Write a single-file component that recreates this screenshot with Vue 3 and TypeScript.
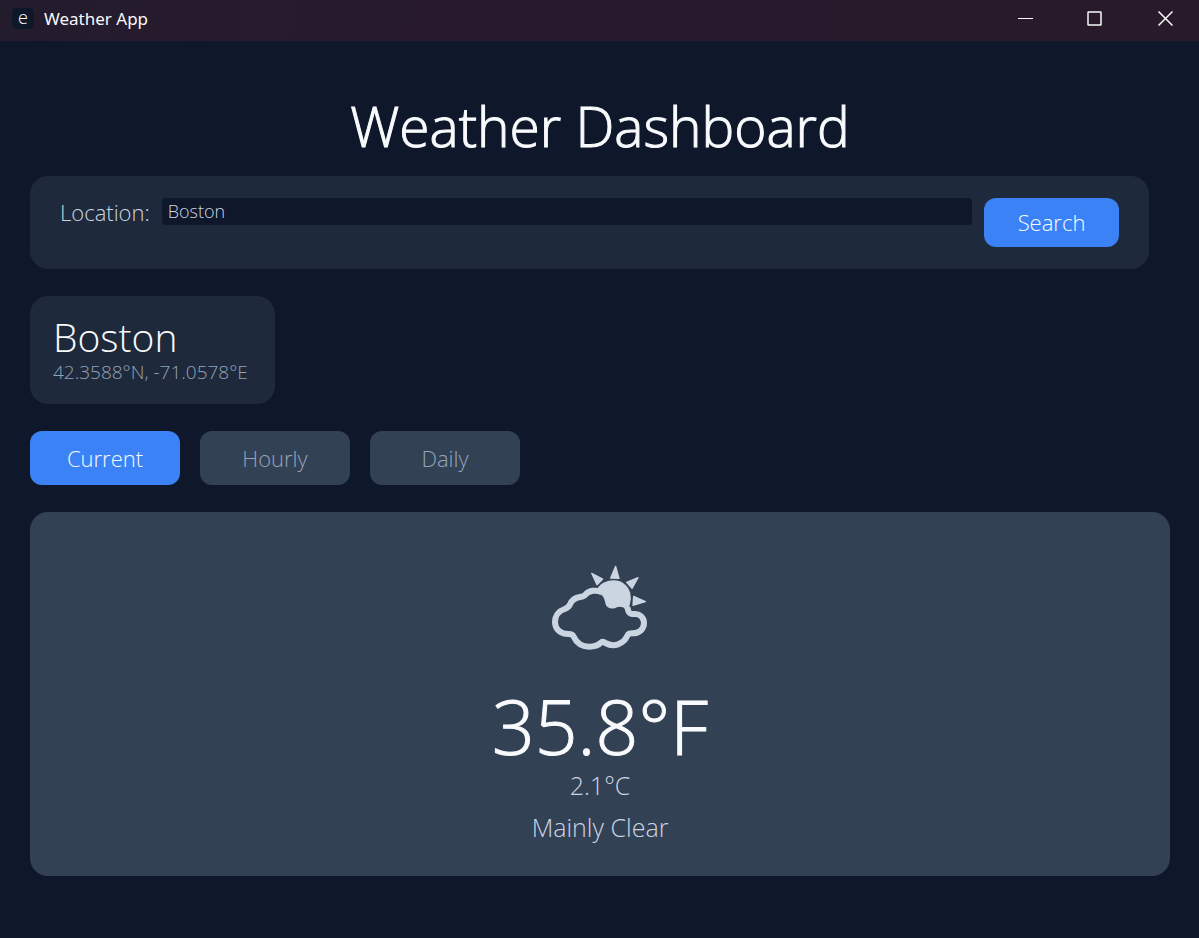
<script setup lang="ts">
import { ref } from 'vue'

type View = 'Current' | 'Hourly' | 'Daily'

const views: View[] = ['Current', 'Hourly', 'Daily']
const active = ref<View>('Current')
const query = ref('Boston')
const place = { name: 'Boston', coordinates: '42.3588°N, -71.0578°E' }
const weather = { fahrenheit: '35.8°F', celsius: '2.1°C', condition: 'Mainly Clear' }
</script>

<template>
  <div class="window">
    <header class="titlebar">
      <span class="app-icon" aria-hidden="true">e</span>
      <span class="app-name">Weather App</span>
      <div class="controls">
        <button type="button" aria-label="Minimize">
          <svg width="16" height="16" viewBox="0 0 16 16"><path d="M1 7.500H16" /></svg>
        </button>
        <button type="button" aria-label="Maximize">
          <svg width="16" height="16" viewBox="0 0 16 16">
            <rect class="frame" x="1" y="1" width="13" height="13" rx="0.500" />
          </svg>
        </button>
        <button type="button" aria-label="Close">
          <svg width="16" height="16" viewBox="0 0 16 16"><path class="cross" d="M1.500 0.500L15.500 14.500M15.500 0.500L1.500 14.500" /></svg>
        </button>
      </div>
    </header>

    <main class="content">
      <h1>Weather Dashboard</h1>

      <form class="search" @submit.prevent>
        <label for="location">Location:</label>
        <input id="location" v-model="query" type="text" autocomplete="off" spellcheck="false" />
        <button type="submit">Search</button>
      </form>

      <section class="place">
        <h2>{{ place.name }}</h2>
        <p>{{ place.coordinates }}</p>
      </section>

      <nav class="tabs">
        <button
          v-for="view in views"
          :key="view"
          type="button"
          :class="{ active: view === active }"
          @click="active = view"
        >
          {{ view }}
        </button>
      </nav>

      <section class="weather">
        <svg class="weather-icon" viewBox="0 0 360 315" aria-hidden="true">
          <g class="solid">
            <path d="M155 55L188 72L171 89Z" />
            <path d="M227 34L237 70L212 69Z" />
            <path d="M294 68L276 100L260 82Z" />
            <path d="M281 124L316 140L279 151Z" />
            <path d="M176 98C192 78 228 70 250 87C270 101 275 128 267 150L262 164C249 151 238 150 224 158C207 161 198 154 197 139C194 123 186 115 172 112Z" />
          </g>
          <path
            class="outline"
            d="M186 112C168 103 147 107 137 118C133 124 127 125 120 126C105 128 94 137 89 150C86 157 81 159 74 162C56 168 45 183 45 201C45 223 62 237 85 237C94 237 98 238 101 245C110 265 127 275 148 275C163 275 176 270 183 263C188 259 191 260 196 264C207 270 222 272 234 268C248 263 256 255 261 244C264 235 268 235 278 235C298 235 312 222 312 204C312 186 297 175 282 177C272 178 268 176 265 168L262 157"
          />
        </svg>
        <p class="fahrenheit">{{ weather.fahrenheit }}</p>
        <p class="celsius">{{ weather.celsius }}</p>
        <p class="condition">{{ weather.condition }}</p>
      </section>
    </main>
  </div>
</template>

<style>
body {
  margin: 0;
  background: #0f172a;
}
</style>

<style scoped>
.window {
  min-height: 100vh;
  background: #0f172a;
  color: #f8fafc;
  font-family: "Open Sans", "Noto Sans", sans-serif;
  font-weight: 300;
}

h1,
h2,
p {
  margin: 0;
  font-weight: 300;
}

button {
  border: 0;
  padding: 0;
  font: inherit;
  cursor: pointer;
}

.titlebar {
  display: flex;
  align-items: center;
  height: 41px;
  box-sizing: border-box;
  padding: 0 10px 4px 12px;
  background: linear-gradient(100deg, #231c2c 0%, #281a2d 30%, #281a2b 100%);
}

.app-icon {
  width: 22px;
  height: 21px;
  border-radius: 5px;
  background: #0f172a;
  font-size: 18px;
  line-height: 18px;
  text-align: center;
}

.app-name {
  margin-left: 10px;
  font-family: "Noto Sans", sans-serif;
  font-size: 17px;
  line-height: 24px;
  font-weight: 400;
}

.controls {
  display: flex;
  gap: 22px;
  margin-left: auto;
}

.controls button {
  display: flex;
  align-items: center;
  justify-content: center;
  width: 48px;
  height: 36px;
  background: transparent;
}

.controls svg {
  fill: none;
  stroke: #f8fafc;
}

.frame,
.cross {
  stroke-width: 1.5;
}

.content {
  padding: 47px 29px 30px 30px;
}

h1 {
  font-size: 55px;
  line-height: 76px;
  text-align: center;
}

h1,
.fahrenheit {
  -webkit-text-stroke: 1px #f8fafc;
}

.search {
  display: flex;
  align-items: flex-start;
  gap: 12px;
  margin: 12px 21px 0 0;
  padding: 22px 30px;
  border-radius: 18px;
  background: #1e293b;
}

.search label {
  color: #cbd5e1;
  font-size: 22px;
  line-height: 28px;
}

.search input {
  flex: 1;
  min-width: 0;
  height: 27px;
  box-sizing: border-box;
  border: 0;
  border-radius: 4px;
  padding: 0 6px 2px;
  background: #0f172a;
  color: #cbd5e1;
  font: inherit;
  font-size: 18px;
}

.search button {
  width: 135px;
  height: 49px;
  border-radius: 12px;
  background: #3b82f6;
  color: #f8fafc;
  font-size: 22px;
  padding-bottom: 2px;
}

.place {
  width: max-content;
  margin-top: 27px;
  padding: 19px 27px 19px 23px;
  border-radius: 18px;
  background: #1e293b;
}

.place h2 {
  font-size: 39px;
  line-height: 44px;
}

.place p {
  color: #94a3b8;
  font-size: 19px;
  line-height: 26px;
}

.tabs {
  display: flex;
  gap: 20px;
  margin-top: 27px;
}

.tabs button {
  width: 150px;
  height: 54px;
  border-radius: 12px;
  background: #334155;
  color: #94a3b8;
  font-size: 22px;
}

.tabs .active {
  background: #3b82f6;
  color: #f8fafc;
}

.weather {
  display: flex;
  flex-direction: column;
  align-items: center;
  margin-top: 27px;
  padding: 43px 20px 32px;
  border-radius: 18px;
  background: #334155;
}

.weather-icon {
  width: 120px;
  height: 105px;
}

.solid {
  fill: #cbd5e1;
  stroke: #cbd5e1;
  stroke-width: 4;
  stroke-linejoin: round;
}

.outline {
  fill: none;
  stroke: #cbd5e1;
  stroke-width: 18;
  stroke-linejoin: round;
}

.fahrenheit {
  margin-top: 24px;
  font-size: 75px;
  line-height: 84px;
}

.celsius,
.condition {
  color: #cbd5e1;
  font-size: 25px;
  line-height: 34px;
}

.condition {
  margin-top: 8px;
}
</style>
